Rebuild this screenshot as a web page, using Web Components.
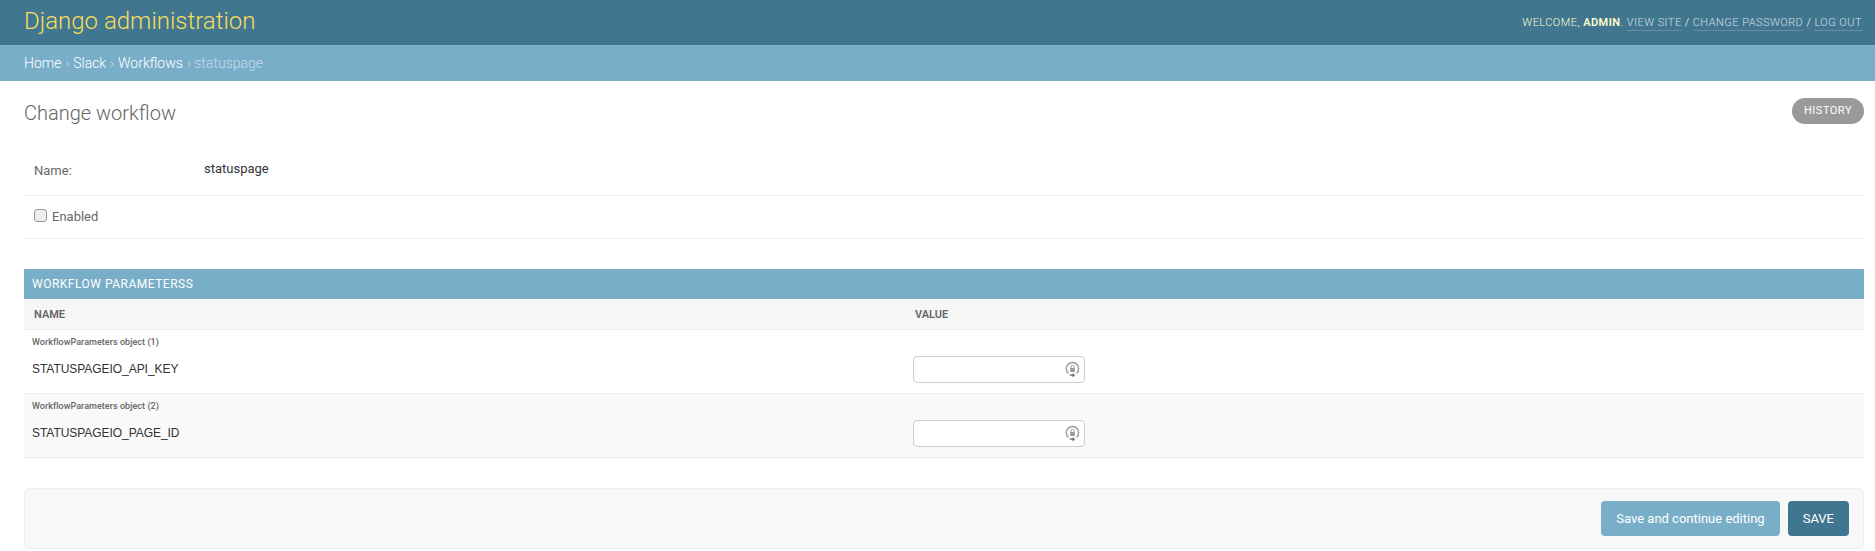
<!DOCTYPE html>
<html>
<head>
<meta charset="utf-8">
<title>Change workflow</title>
<style>
  body { margin: 0; font-family: Roboto, "Liberation Sans", sans-serif; font-size: 14px; color: #333; background: #fff; }
</style>
</head>
<body>
<admin-header></admin-header>
<admin-breadcrumbs></admin-breadcrumbs>
<change-form></change-form>

<script>
class AdminHeader extends HTMLElement {
  constructor() {
    super();
    this.shadowDOM = this.attachShadow({ mode: 'open' });
  }

  connectedCallback() {
    this.shadowDOM.innerHTML = `
    <style>
    :host {
        display: flex;
        justify-content: space-between;
        align-items: center;
        height: 45px;
        padding: 0 13px 0 24px;
        background: #417690;
        color: #ffc;
    }
    h1 {
        margin: 0 0 3px;
        font-size: 24px;
        font-weight: 300;
        color: #f5dd5d;
    }
    .tools {
        font-size: 11px;
        font-weight: 300;
        letter-spacing: 0.46px;
        text-transform: uppercase;
    }
    strong { font-weight: 600; }
    a {
        color: #fff;
        opacity: .75;
        border-bottom: 1px solid rgba(255,255,255,.25);
        padding-bottom: 1px;
    }
    </style>
    <h1>Django administration</h1>
    <div class="tools">Welcome, <strong>admin</strong>. <a>View site</a> / <a>Change password</a> / <a>Log out</a></div>
    `;
  }
}

class AdminBreadcrumbs extends HTMLElement {
  constructor() {
    super();
    this.shadowDOM = this.attachShadow({ mode: 'open' });
  }

  connectedCallback() {
    this.shadowDOM.innerHTML = `
    <style>
    :host {
        display: flex;
        align-items: center;
        gap: 3.8px;
        height: 36px;
        padding: 0 24px;
        background: #79aec8;
        color: #c4dce8;
        font-size: 14px;
        font-weight: 300;
    }
    a { color: #fff; font-weight: 300; }
    </style>
    <a>Home</a> › <a>Slack</a> › <a>Workflows</a> › statuspage
    `;
  }
}

class ChangeForm extends HTMLElement {
  constructor() {
    super();
    this.shadowDOM = this.attachShadow({ mode: 'open' });
  }

  connectedCallback() {
    this.shadowDOM.innerHTML = `
    <style>
    * { box-sizing: border-box; }
    :host {
        display: block;
        padding: 17px 11px 0 24px;
    }
    .title {
        display: flex;
        justify-content: space-between;
        align-items: flex-start;
        height: 49px;
    }
    h1 {
        margin: 0;
        padding-top: 3px;
        font-size: 20px;
        font-weight: 300;
        color: #666;
    }
    .history {
        height: 26px;
        line-height: 26px;
        padding: 0 12px;
        border-radius: 15px;
        background: #999;
        color: #fff;
        font-size: 11px;
        letter-spacing: 0.5px;
    }
    .form-row {
        display: flex;
        align-items: center;
        border-bottom: 1px solid #eee;
        padding: 0 10px;
        font-size: 13px;
        color: #666;
    }
    .name { height: 49px; }
    .name label { width: 170px; padding-bottom: 2px; }
    .name span { color: #333; padding-bottom: 5px; }
    .enabled { height: 43px; gap: 5px; padding-bottom: 2px; }
    .check {
        width: 13px;
        height: 13px;
        margin-top: -2px;
        border: 1px solid #999;
        border-radius: 3px;
        background: #eee;
    }
    h2 {
        display: flex;
        align-items: center;
        height: 30px;
        margin: 30px 0 0;
        padding: 0 8px;
        background: #79aec8;
        color: #fff;
        font-size: 12px;
        font-weight: 400;
        letter-spacing: 0.5px;
    }
    .thead {
        display: grid;
        grid-template-columns: 881px 1fr;
        align-items: center;
        height: 31px;
        padding: 0 10px;
        background: #f6f6f6;
        border-bottom: 1px solid #eee;
        color: #666;
        font-size: 11px;
        font-weight: 600;
    }
    .submit-row {
        display: flex;
        justify-content: flex-end;
        gap: 8px;
        height: 61px;
        margin-top: 30px;
        padding: 12px 14px;
        background: #f8f8f8;
        border: 1px solid #eee;
        border-radius: 4px;
    }
    .btn {
        height: 35px;
        line-height: 35px;
        padding: 0 15px;
        border-radius: 4px;
        background: #79aec8;
        color: #fff;
        font-size: 13px;
    }
    .btn.save { background: #417690; }
    </style>
    <div class="title">
      <h1>Change workflow</h1>
      <span class="history">HISTORY</span>
    </div>
    <div class="form-row name"><label>Name:</label><span>statuspage</span></div>
    <div class="form-row enabled"><span class="check"></span>Enabled</div>
    <h2>WORKFLOW PARAMETERSS</h2>
    <div class="thead"><span>NAME</span><span>VALUE</span></div>
    <param-row object="WorkflowParameters object (1)" name="STATUSPAGEIO_API_KEY"></param-row>
    <param-row alt object="WorkflowParameters object (2)" name="STATUSPAGEIO_PAGE_ID"></param-row>
    <div class="submit-row">
      <span class="btn">Save and continue editing</span>
      <span class="btn save">SAVE</span>
    </div>
    `;
  }
}

class ParamRow extends HTMLElement {
  constructor() {
    super();
    this.shadowDOM = this.attachShadow({ mode: 'open' });
  }

  connectedCallback() {
    this.shadowDOM.innerHTML = `
    <style>
    * { box-sizing: border-box; }
    :host {
        display: block;
        height: 64px;
        padding: 7px 8px 0;
        border-bottom: 1px solid #eee;
        background: #fff;
    }
    :host([alt]) { background: #f9f9f9; }
    .object {
        font-size: 9px;
        font-weight: 500;
        line-height: 11px;
        letter-spacing: 0.05px;
        color: #666;
    }
    .row {
        display: grid;
        grid-template-columns: 881px 172px;
        align-items: center;
        margin-top: 8px;
    }
    .label { font-size: 12px; letter-spacing: -0.05px; padding-bottom: 2px; color: #333; font-family: "Liberation Sans", sans-serif; }
    .input {
        display: flex;
        align-items: center;
        justify-content: flex-end;
        height: 27px;
        padding-right: 4px;
        background: #fff;
        border: 1px solid #ccc;
        border-radius: 4px;
    }
    svg { display: block; }
    </style>
    <div class="object">${this.getAttribute('object')}</div>
    <div class="row">
      <span class="label">${this.getAttribute('name')}</span>
      <span class="input">
        <svg width="15" height="17" viewBox="0 0 15 17">
          <path d="M3.4 12.4A6.2 6.2 0 1 1 11.6 12.4" fill="none" stroke="#999" stroke-width="1.4"/>
          <path d="M4.6 13.6A6.2 6.2 0 0 0 10 13.8" fill="none" stroke="#888" stroke-width="1.4"/>
          <path d="M8.7 12v4.6l-3-2.3z" fill="#777"/>
          <rect x="5.2" y="7" width="4.6" height="4" rx=".6" fill="#999"/>
          <path d="M6 7V5.8a1.5 1.5 0 0 1 3 0V7" fill="none" stroke="#999"/>
        </svg>
      </span>
    </div>
    `;
  }
}

customElements.define('admin-header', AdminHeader);
customElements.define('admin-breadcrumbs', AdminBreadcrumbs);
customElements.define('change-form', ChangeForm);
customElements.define('param-row', ParamRow);
</script>
</body>
</html>
